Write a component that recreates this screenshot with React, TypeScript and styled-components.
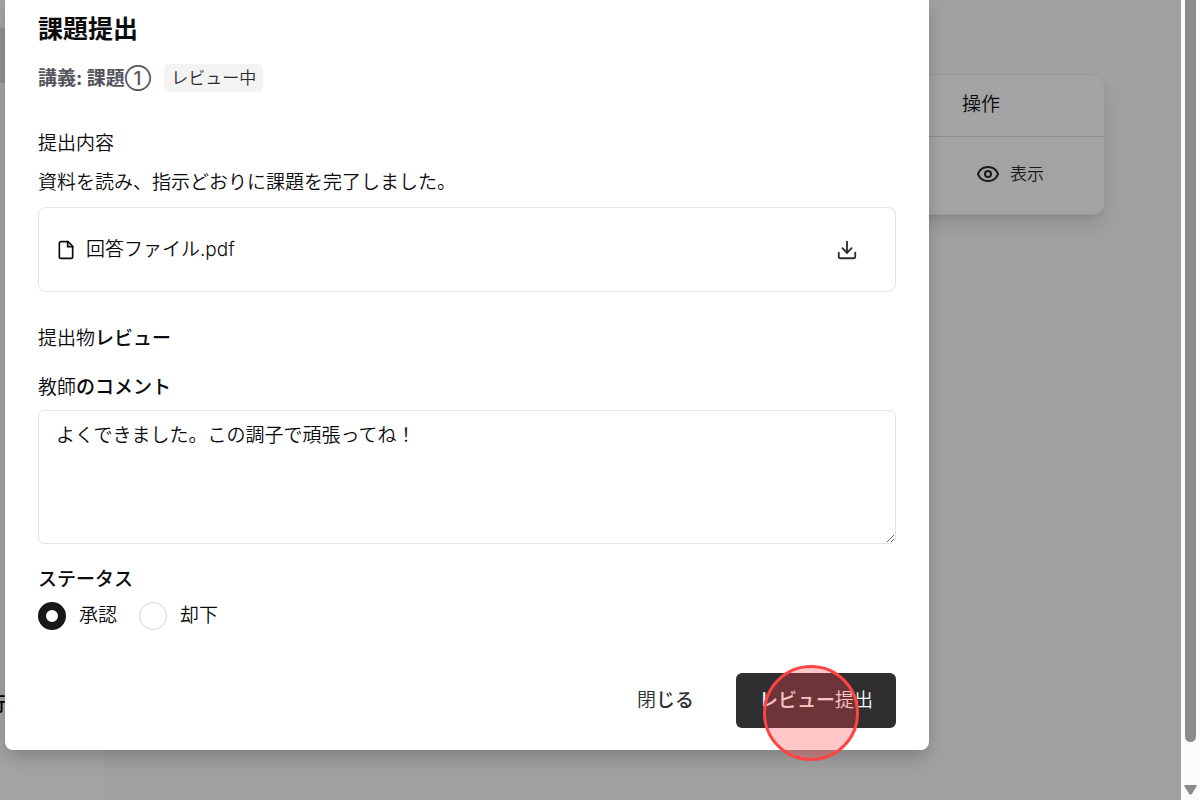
import React from "react";
import styled, { createGlobalStyle } from "styled-components";
import { Download, Eye } from "lucide-react";

const GlobalStyle = createGlobalStyle`
  *, *::before, *::after { box-sizing: border-box; }
  body {
    margin: 0;
    overflow: hidden;
    color: #0b0b0d;
    background: #a0a0a0;
    font-family: Inter, "Noto Sans CJK JP", sans-serif;
    font-size: 19px;
    font-weight: 350;
    line-height: 28px;
  }
  button, textarea { font: inherit; color: inherit; }
  h1, h2, p { margin: 0; }
`;

const Shell = styled.div`
  position: relative;
  display: flex;
  height: 100vh;
  overflow: hidden;
`;

const Sidebar = styled.nav`
  flex: none;
  width: 105px;
  display: flex;
  flex-direction: column;
  justify-content: space-between;
  padding: 28px 0 80px;
  background: #a3a3a3;
`;

const NavCurrent = styled.div`
  height: 55px;
  background: #919193;
`;

const NavLink = styled.a`
  margin-left: -13px;
  line-height: 30px;
  font-weight: 500;
  color: #000;
  text-decoration: none;
`;

const Main = styled.main`
  flex: 1;
  padding: 74px 76px;
  background: #a0a0a0;
`;

const TableCard = styled.div`
  border: 1px solid #999;
  border-radius: 12px;
  background: #a3a3a3;
  box-shadow: 0 12px 18px -4px rgba(0, 0, 0, 0.12), 0 4px 7px -5px rgba(0, 0, 0, 0.15);
`;

const Table = styled.table`
  width: 100%;
  border-collapse: collapse;
  table-layout: fixed;
`;

const HeadCell = styled.th<{ $action?: boolean }>`
  width: ${(p) => (p.$action ? "161px" : "auto")};
  height: 61px;
  padding: 0 19px;
  border-bottom: 1px solid #8e8e8e;
  text-align: left;
  font-weight: 350;
`;

const Cell = styled.td`
  height: 78px;
  padding: 0 19px 2px;
`;

const ViewButton = styled.button`
  display: flex;
  align-items: center;
  gap: 10px;
  height: 43px;
  padding: 0 14px;
  border: 0;
  background: none;
  font-size: 17px;
  color: #1a1a1c;
`;

const ScrollTrack = styled.div`
  flex: none;
  width: 19px;
  display: flex;
  flex-direction: column;
  align-items: center;
  gap: 43px;
  padding-bottom: 5px;
  background: #fcfcfc;
`;

const ScrollThumb = styled.div`
  flex: 1;
  width: 11px;
  border-radius: 0 0 6px 6px;
  background: #8b8b8b;
`;

const Dialog = styled.form`
  position: absolute;
  top: 0;
  left: 5px;
  right: 271px;
  display: flex;
  flex-direction: column;
  padding: 12px 33px 22px;
  border-radius: 0 0 8px 8px;
  background: #fff;
  box-shadow: 0 12px 18px -4px rgba(0, 0, 0, 0.12), 0 4px 18px -2px rgba(0, 0, 0, 0.12);
`;

const Title = styled.h1`
  font-size: 25px;
  line-height: 34px;
  font-weight: 700;
`;

const Subtitle = styled.div`
  display: flex;
  align-items: center;
  gap: 13px;
  height: 28px;
  margin-top: 18px;
`;

const Lecture = styled.h2`
  padding-top: 2px;
  font-size: 19px;
  line-height: 28px;
  font-weight: 700;
  color: #55555e;
`;

const Numeral = styled.span`
  font-weight: 500;
`;

const Badge = styled.span`
  height: 28px;
  padding: 0 7px;
  border-radius: 5px;
  background: #f3f3f4;
  font-size: 17px;
  color: #2c2c2f;
`;

const Section = styled.section`
  display: flex;
  flex-direction: column;
  margin-top: 38px;
`;

const Message = styled.p`
  margin-top: 11px;
`;

const Strong = styled.span`
  font-weight: 500;
`;

const Light = styled.span`
  font-weight: 350;
`;

const FileCard = styled.div`
  display: flex;
  align-items: center;
  gap: 10px;
  height: 85px;
  margin-top: 10px;
  padding: 0 18px 0 17px;
  border: 1px solid #e4e4e6;
  border-radius: 8px;
`;

const FileName = styled.span`
  flex: 1;
`;

const IconButton = styled.button`
  display: flex;
  padding: 10px 19px;
  border: 0;
  background: none;
  color: #2c2c2f;
`;

const ReviewTitle = styled.h2`
  margin-top: 33px;
  font-size: 19px;
  font-weight: 500;
`;

const FieldLabel = styled.label`
  margin-top: 21px;
`;

const Comment = styled.textarea`
  height: 134px;
  margin-top: 8px;
  padding: 11px 17px;
  border: 1px solid #e4e4e6;
  border-radius: 6px;
  outline: 0;
  background: #fff;
  resize: vertical;
`;

const StatusGroup = styled.fieldset`
  margin: 22px 0 0;
  padding: 0;
  border: 0;
`;

const Legend = styled.legend`
  padding: 0;
  font-weight: 500;
`;

const Options = styled.div`
  display: flex;
  gap: 22px;
  margin-top: 8px;
`;

const Option = styled.label`
  display: flex;
  align-items: center;
  gap: 13px;
`;

const Radio = styled.input`
  appearance: none;
  width: 28px;
  height: 28px;
  margin: 0;
  border: 1px solid #d6d6d8;
  border-radius: 50%;
  background: #fff;
  &:checked { border: 8px solid #18181b; }
`;

const Footer = styled.footer`
  display: flex;
  justify-content: flex-end;
  gap: 19px;
  margin-top: 43px;
`;

const FooterButton = styled.button<{ $primary?: boolean }>`
  height: 55px;
  padding: 0 23px;
  border: 0;
  border-radius: 6px;
  font-weight: 500;
  color: ${(p) => (p.$primary ? "#fafafa" : "#2f2f32")};
  background: ${(p) => (p.$primary ? "#2f2f32" : "#fff")};
`;

const ClickMarker = styled.div`
  position: absolute;
  right: 70px;
  bottom: -11px;
  width: 96px;
  height: 96px;
  border: 3px solid #ff4444;
  border-radius: 50%;
  background: rgba(255, 68, 68, 0.3);
  pointer-events: none;
`;

export default function App() {
  return (
    <>
      <GlobalStyle />
      <Shell>
        <Sidebar>
          <NavCurrent />
          <NavLink href="#">行</NavLink>
        </Sidebar>
        <Main>
          <TableCard>
            <Table>
              <thead>
                <tr>
                  <HeadCell />
                  <HeadCell $action>操作</HeadCell>
                </tr>
              </thead>
              <tbody>
                <tr>
                  <Cell />
                  <Cell>
                    <ViewButton type="button">
                      <Eye size={24} />
                      表示
                    </ViewButton>
                  </Cell>
                </tr>
              </tbody>
            </Table>
          </TableCard>
        </Main>
        <ScrollTrack>
          <ScrollThumb />
          <svg width="13" height="10" viewBox="0 0 13 10">
            <path d="M1.5 0h10q2 0 1 1.6L8 8.8q-1.5 2-3 0L.5 1.6Q-.5 0 1.5 0z" fill="#8b8b8b" />
          </svg>
        </ScrollTrack>

        <Dialog role="dialog" aria-labelledby="title">
          <Title id="title">課題提出</Title>
          <Subtitle>
            <Lecture>
              講義: 課題<Numeral>①</Numeral>
            </Lecture>
            <Badge>レビュー中</Badge>
          </Subtitle>

          <Section>
            <p>提出内容</p>
            <Message>資料を読み、指示どおりに課題を完了しました。</Message>
            <FileCard>
              <svg width="20" height="20" viewBox="0 0 24 24" fill="none" stroke="currentColor" strokeWidth="2" strokeLinecap="round" strokeLinejoin="round">
                <path d="M14.5 2H6a2 2 0 0 0-2 2v16a2 2 0 0 0 2 2h12a2 2 0 0 0 2-2V7.5L14.5 2z" />
                <path d="M14 2v6h6" />
              </svg>
              <FileName>回答ファイル.pdf</FileName>
              <IconButton type="button" aria-label="ダウンロード">
                <Download size={22} />
              </IconButton>
            </FileCard>
          </Section>

          <ReviewTitle>
            <Light>提出物</Light>レビュー
          </ReviewTitle>
          <FieldLabel htmlFor="comment">
            教師<Strong>のコメント</Strong>
          </FieldLabel>
          <Comment id="comment" defaultValue="よくできました。この調子で頑張ってね！" />

          <StatusGroup>
            <Legend>ステータス</Legend>
            <Options>
              <Option>
                <Radio type="radio" name="status" defaultChecked />
                承認
              </Option>
              <Option>
                <Radio type="radio" name="status" />
                却下
              </Option>
            </Options>
          </StatusGroup>

          <Footer>
            <FooterButton type="button">
              <Light>閉</Light>じる
            </FooterButton>
            <FooterButton type="button" $primary>
              レビュー<Light>提出</Light>
            </FooterButton>
          </Footer>
          <ClickMarker />
        </Dialog>
      </Shell>
    </>
  );
}
